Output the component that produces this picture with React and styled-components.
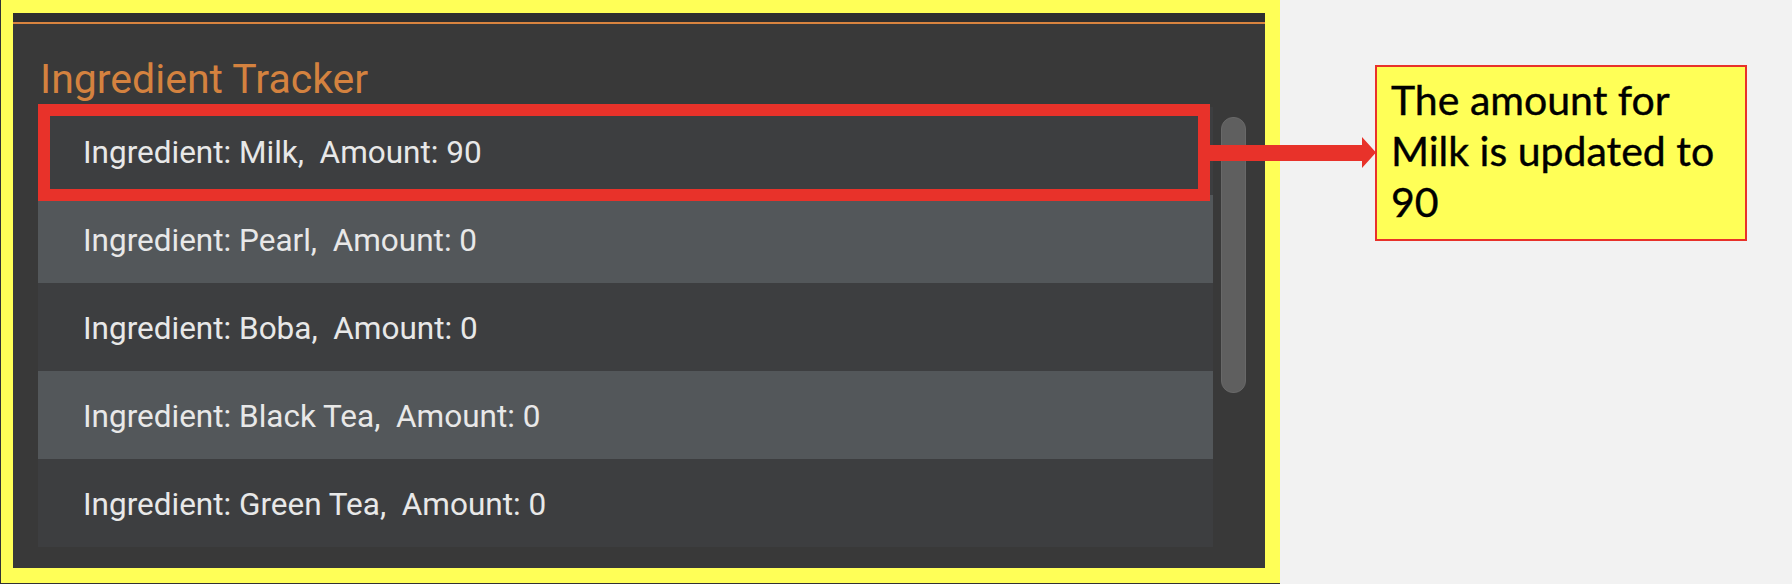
import React from "react";
import styled, { createGlobalStyle } from "styled-components";

const GlobalStyle = createGlobalStyle`
  html, body {
    margin: 0;
    padding: 0;
    background: #f2f2f2;
  }
`;

const ingredients = [
  { name: "Milk", amount: 90 },
  { name: "Pearl", amount: 0 },
  { name: "Boba", amount: 0 },
  { name: "Black Tea", amount: 0 },
  { name: "Green Tea", amount: 0 },
];

const App = () => {
  return (
    <Page>
      <GlobalStyle />
      <Frame>
        <Panel>
          <TopStrip />
          <AccentLine />
          <Content>
            <Title>Ingredient Tracker</Title>
            <Body>
              <List>
                {ingredients.map((item, i) => (
                  <Row key={item.name} light={i % 2 === 1}>
                    {`Ingredient: ${item.name},  Amount: ${item.amount}`}
                  </Row>
                ))}
                <Highlight />
              </List>
              <ScrollTrack>
                <Thumb />
              </ScrollTrack>
            </Body>
          </Content>
        </Panel>
      </Frame>

      <Arrow width="170" height="35" viewBox="0 0 170 35">
        <polygon
          points="0,10 154,10 154,2 168,17.5 154,33 154,26 0,26"
          fill="#e8322a"
        />
      </Arrow>

      <Callout>
        The amount for
        <br />
        Milk is updated to
        <br />
        90
      </Callout>
    </Page>
  );
};

const Page = styled.div`
  position: relative;
  width: 1792px;
  height: 584px;
  display: flex;
  align-items: flex-start;
  background: #f2f2f2;
  overflow: hidden;
`;

const Frame = styled.div`
  box-sizing: border-box;
  width: 1280px;
  height: 584px;
  flex-shrink: 0;
  padding: 13px 15px 15px 12px;
  background: #ffff57;
  border-left: 1px solid #333333;
  border-bottom: 1px solid #333333;
  display: flex;
`;

const Panel = styled.div`
  flex: 1;
  display: flex;
  flex-direction: column;
  background: #393939;
`;

const TopStrip = styled.div`
  height: 9px;
  background: #2f2f2f;
`;

const AccentLine = styled.div`
  height: 2px;
  background: #d9843f;
`;

const Content = styled.div`
  padding: 31px 0 0 25px;
  display: flex;
  flex-direction: column;
`;

const Title = styled.h1`
  margin: 0 0 0 2px;
  font-family: Roboto, "Liberation Sans", sans-serif;
  font-weight: 400;
  font-size: 41px;
  line-height: 48px;
  color: #d4823f;
`;

const Body = styled.div`
  display: flex;
  align-items: flex-start;
  margin-top: 4px;
`;

const List = styled.div`
  position: relative;
  width: 1175px;
  display: flex;
  flex-direction: column;
`;

const Row = styled.div`
  box-sizing: border-box;
  height: 88px;
  display: flex;
  align-items: center;
  padding: 3px 0 0 45px;
  background: ${(p) => (p.light ? "#53575a" : "#3d3e40")};
  font-family: Roboto, "Liberation Sans", sans-serif;
  font-size: 31.5px;
  color: #e8e8e8;
  white-space: pre;
`;

const Highlight = styled.div`
  position: absolute;
  left: 0;
  top: -3px;
  width: 1172px;
  height: 97px;
  box-sizing: border-box;
  border: 12px solid #e8322a;
`;

const ScrollTrack = styled.div`
  margin-left: 8px;
  padding-top: 10px;
`;

const Thumb = styled.div`
  box-sizing: border-box;
  width: 25px;
  height: 276px;
  border-radius: 12px;
  background: #5f5f5f;
  border: 1px solid #686868;
`;

const Arrow = styled.svg`
  position: absolute;
  left: 1208px;
  top: 135px;
`;

const Callout = styled.div`
  box-sizing: border-box;
  width: 372px;
  height: 176px;
  margin: 65px 0 0 95px;
  padding: 7px 0 0 14px;
  background: #ffff57;
  border: 2px solid #e8322a;
  font-family: Lato, "Open Sans", sans-serif;
  font-size: 41px;
  line-height: 51px;
  color: #000000;
  -webkit-text-stroke: 0.4px #000000;
`;

export default App;
